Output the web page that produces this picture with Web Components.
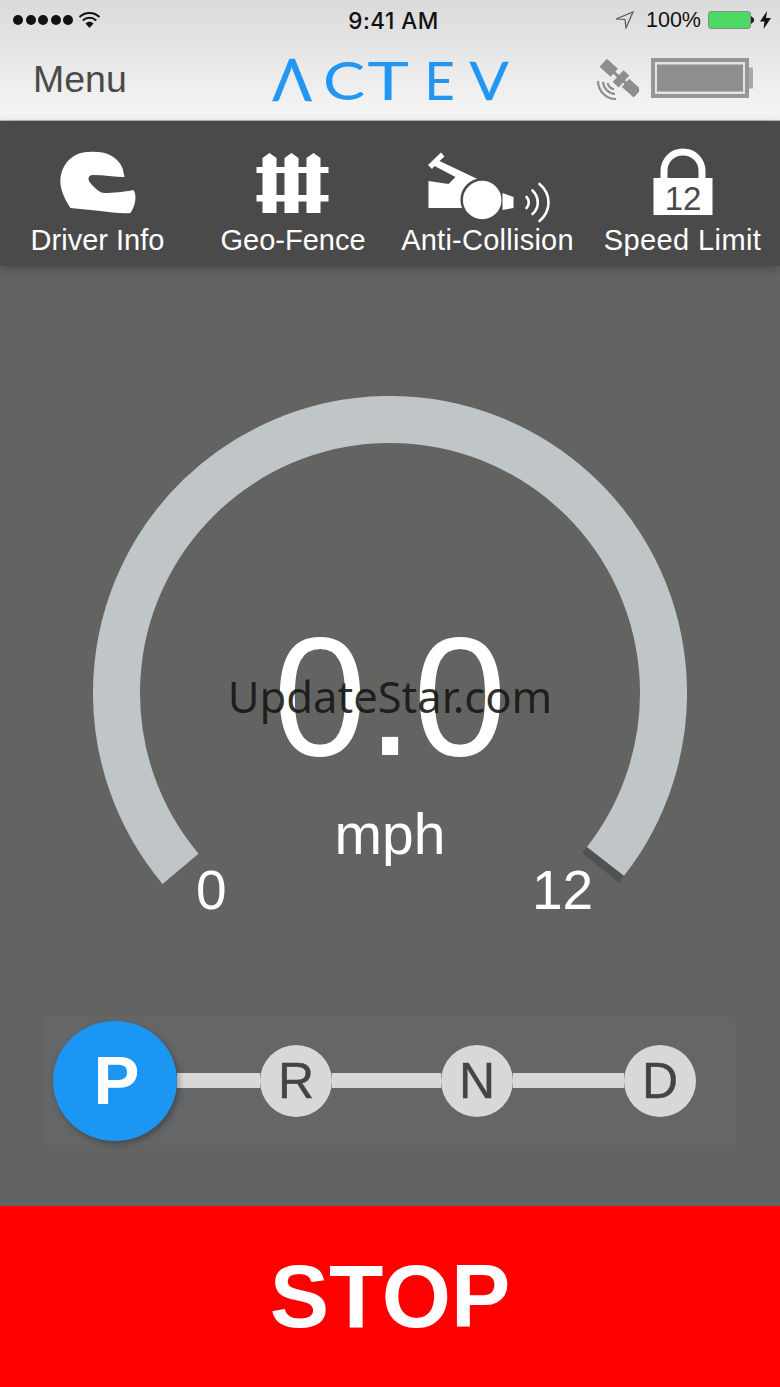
<!DOCTYPE html>
<html lang="en">
<head>
<meta charset="utf-8">
<title>ACTEV</title>
<style>
	html, body { margin: 0; padding: 0; background: #636462; }
	body { width: 780px; height: 1387px; overflow: hidden; display: flex; flex-direction: column; font-family: "Liberation Sans", Arial, sans-serif; }
</style>
</head>
<body>
<app-header></app-header>
<feature-bar>
	<feature-item label="Driver Info">
		<svg slot="icon" width="120" height="72" viewBox="37.5 146 120 72">
			<path fill="#fff" d="M70 208C62 196 59 186 60 178 62 162 74 152 88 152 104 151 116 155 122 168L124 177C114 177 104 175 92 175 88 175 87 179 89 182 94 188 99 193 104 193 112 193 124 192 133 190 136 194 136 204 130 213 120 214 110 212 100 211 90 210 80 209 70 208Z"/>
		</svg>
	</feature-item>
	<feature-item label="Geo-Fence" style="--shift:1px">
		<svg slot="icon" width="120" height="72" viewBox="232.5 146 120 72">
			<path fill="#fff" d="M262 213V158L269 153 276 158V213ZM284 213V158L291 153 298 158V213ZM306 213V158L313 153 320 158V213Z"/>
			<path fill="#fff" d="M256 167H328V173H256ZM256 195H328V201.5H256Z"/>
		</svg>
	</feature-item>
	<feature-item label="Anti-Collision" style="--track:.25px">
		<svg slot="icon" width="130" height="78" viewBox="422.5 146 130 78" style="margin-bottom:-6px">
			<path fill="#fff" d="M427.5 165 440.5 152.500 444 156.500 439 161 479 180 470 192 465 208H428V181L448 184 455 177 434 166 431.500 169Z"/>
			<circle cx="481.7" cy="200" r="20.5" fill="#fff" stroke="#4a4a4a" stroke-width="2.5"/>
			<path fill="#fff" d="M502 193 513 197V208L502 210Z"/>
			<g fill="none" stroke="#fff" stroke-width="2.6" stroke-linecap="round">
				<path d="M526 197C529 200 529 205 526 208"/>
				<path d="M532 190.5C539 197 539 208 532 214"/>
				<path d="M539 184C551 194 551 211 539 221"/>
			</g>
		</svg>
	</feature-item>
	<feature-item label="Speed Limit" style="--track:.4px">
		<svg slot="icon" width="120" height="72" viewBox="622.5 146 120 72">
			<path fill="none" stroke="#fff" stroke-width="7" d="M663.5 180V171C663.5 160 672 152 682.5 152 693 152 701.5 160 701.5 171V180"/>
			<rect x="653" y="178" width="59" height="37" fill="#fff"/>
			<text x="682.5" y="210" text-anchor="middle" font-size="33" fill="#4a4a4a" font-family="Liberation Sans, Arial, sans-serif">12</text>
		</svg>
	</feature-item>
</feature-bar>
<drive-panel>
	<speed-gauge value="0.0" unit="mph" min="0" max="12"></speed-gauge>
	<gear-shift active="P"></gear-shift>
</drive-panel>
<stop-button>STOP</stop-button>

<script>
const FONT = `"Liberation Sans", Arial, sans-serif`;

class AppHeader extends HTMLElement {
	constructor() {
		super();
		this.attachShadow({ mode: "open" });
	}

	connectedCallback() {
		this.shadowRoot.innerHTML = `
      <style>
        :host{ display:block; height:120px; flex:none; background:linear-gradient(180deg,#dadada,#f6f6f6); font-family:${FONT}; border-bottom:1px solid #b9b9b9; }
        .status{ height:40px; display:grid; grid-template-columns:1fr auto 1fr; align-items:center; color:#111; font-size:21.5px; }
        .left{ display:flex; align-items:center; gap:5px; padding-left:13px }
        .dots{ display:flex; gap:2.5px }
        .dots i{ width:10px; height:10px; border-radius:50%; background:#111; display:block }
        .time{ font-family:Inter, ${FONT}; font-weight:500; font-size:22.5px; letter-spacing:.5px; margin-left:7px }
        .right{ display:flex; align-items:center; justify-content:flex-end; padding-right:9px }
        .pct{ margin:0 7px 0 12px }
        .cell{ width:43px; height:18px; box-sizing:border-box; border:1px solid #8a8a8a; border-radius:3px; background:#4cd964 }
        .nav{ height:80px; display:grid; grid-template-columns:1fr auto 1fr; align-items:center; }
        .menu{ padding-left:33px; font-size:37.5px; color:#4a4a4a; padding-bottom:2px }
        .logo{ display:flex; align-items:center; color:#2196f3; font-family:Lato, ${FONT}; font-weight:400; font-size:53px; line-height:1; padding-bottom:2px }
        .logo span{ display:flex; justify-content:center; flex:none }
        .logo .a{ width:39px; margin-right:13px; font-size:58px; -webkit-text-stroke:.6px #2196f3 }
        .logo .c{ width:38px; margin-right:5px; transform:scaleX(1.19) }
        .logo .t{ width:40px; margin-right:19px; transform:scaleX(1.33) }
        .logo .e{ width:26px; margin-right:17px }
        .logo .v{ width:38px; transform:scaleX(1.09); -webkit-text-stroke:.4px #2196f3 }
        .tools{ display:flex; align-items:center; justify-content:flex-end; padding-right:27px; gap:12px; padding-bottom:3px }
        svg{ display:block }
      </style>
      <div class="status">
        <div class="left">
          <div class="dots"><i></i><i></i><i></i><i></i><i></i></div>
          <svg width="23" height="20" viewBox="0 0 23 20"><path fill="none" stroke="#111" stroke-width="2" d="M1.5 7C7 1.5 16 1.5 21.5 7M4.8 10.5C8.5 6.8 14.5 6.8 18.2 10.5"/><path fill="#111" d="M7.5 13.5C10 11 13 11 15.5 13.5L11.5 18Z"/></svg>
        </div>
        <div class="time">9:41 AM</div>
        <div class="right">
          <svg width="19" height="18" viewBox="0 0 19 18"><path fill="none" stroke="#555" stroke-width="1.2" d="M1 8 18 1 11 17 10 8.5Z"/></svg>
          <span class="pct">100%</span>
          <div class="cell"></div>
          <svg width="4" height="8" viewBox="0 0 4 8"><path fill="#222" d="M0 0 3 2.5V5.5L0 8Z"/></svg>
          <svg style="margin-left:5px" width="11" height="18" viewBox="0 0 11 18"><path fill="#111" d="M7 0 0 10.5H4.5L3.5 18 11 7H6Z"/></svg>
        </div>
      </div>
      <div class="nav">
        <div class="menu">Menu</div>
        <div class="logo" aria-label="ACTEV"><span class="a">Λ</span><span class="c">C</span><span class="t">T</span><span class="e">E</span><span class="v">V</span></div>
        <div class="tools">
          <svg width="44" height="42" viewBox="0 0 44 42">
            <g fill="#8e8e8e" transform="translate(26 20.8) rotate(42)">
              <rect x="-24" y="-5.5" width="15" height="11"/>
              <rect x="-4" y="-8" width="8" height="16"/>
              <rect x="6" y="-5.5" width="16" height="11"/>
              <rect x="-12" y="-1.5" width="20" height="3"/>
            </g>
            <g fill="none" stroke="#8e8e8e" stroke-width="2.2">
              <path d="M3 23A18 18 0 0 0 21 41"/>
              <path d="M8 24A13 13 0 0 0 20 36"/>
              <path d="M12.600 25A8.500 8.500 0 0 0 19 31.300"/>
            </g>
          </svg>
          <svg width="102" height="41" viewBox="0 0 102 41">
            <path fill="#a8a8a8" d="M98 9.5H102V30.5H98Z"/>
            <rect x="2" y="2" width="94" height="36" fill="#e4e4e4" stroke="#969696" stroke-width="4"/>
            <rect x="6" y="6.5" width="86" height="27" fill="#8e8e8e"/>
          </svg>
        </div>
      </div>
    `;
	}
}

class FeatureBar extends HTMLElement {
	constructor() {
		super();
		this.attachShadow({ mode: "open" });
	}

	connectedCallback() {
		this.shadowRoot.innerHTML = `
      <style>
        :host{ display:grid; grid-template-columns:repeat(4,1fr); flex:none; height:145px; background:#4a4a4a; box-shadow:0 3px 10px rgba(0,0,0,.25); position:relative; z-index:2; font-family:${FONT}; }
      </style>
      <slot></slot>
    `;
	}
}

class FeatureItem extends HTMLElement {
	constructor() {
		super();
		this.attachShadow({ mode: "open" });
	}

	connectedCallback() {
		this.shadowRoot.innerHTML = `
      <style>
        :host{ display:flex; flex-direction:column; align-items:center; color:#fff; }
        ::slotted(svg){ display:block; margin-top:25px }
        span{ font-size:29px; line-height:34px; margin-top:5px; margin-left:var(--shift,0); letter-spacing:var(--track,0); white-space:nowrap }
      </style>
      <slot name="icon"></slot>
      <span>${this.getAttribute("label")}</span>
    `;
	}
}

class DrivePanel extends HTMLElement {
	constructor() {
		super();
		this.attachShadow({ mode: "open" });
	}

	connectedCallback() {
		this.shadowRoot.innerHTML = `
      <style>
        :host{ display:flex; flex-direction:column; align-items:center; flex:1; background:#636462; padding-top:130px; box-sizing:border-box; }
      </style>
      <slot></slot>
    `;
	}
}

class SpeedGauge extends HTMLElement {
	constructor() {
		super();
		this.attachShadow({ mode: "open" });
	}

	connectedCallback() {
		const a = (n) => this.getAttribute(n);
		this.shadowRoot.innerHTML = `
      <style>
        :host{ display:block; position:relative; width:594px; height:520px; color:#fff; font-family:${FONT}; }
        svg{ display:block }
        div{ position:absolute; white-space:nowrap; line-height:1 }
        .speed{ left:0; right:0; top:217px; text-align:center; font-size:168px }
        .unit{ left:0; right:0; top:410px; text-align:center; font-size:57px }
        .min{ left:103px; top:467px; font-size:55px }
        .max{ left:439px; top:467px; font-size:55px }
        .mark{ left:0; right:0; top:279px; text-align:center; font-family:"Noto Sans", sans-serif; font-size:43.5px; color:rgba(20,20,20,.88) }
      </style>
      <svg width="594" height="520" viewBox="0 0 594 520">
        <path stroke="#505251" stroke-width="8" d="M491.5 454 528.600 483.700"/>
        <path fill="none" stroke="#c0c6c7" stroke-width="47" d="M87.5 472.8A273.5 273.5 0 1 1 512.5 465.4"/>
      </svg>
      <div class="speed">${a("value")}</div>
      <div class="unit">${a("unit")}</div>
      <div class="min">${a("min")}</div>
      <div class="max">${a("max")}</div>
      <div class="mark">UpdateStar.com</div>
    `;
	}
}

class GearShift extends HTMLElement {
	constructor() {
		super();
		this.attachShadow({ mode: "open" });
	}

	connectedCallback() {
		const active = this.getAttribute("active");
		const gears = ["P", "R", "N", "D"];
		const gaps = [83, 109, 111];
		const row = gears
			.map((g, i) => {
				const bar = i < 3 ? `<i style="width:${gaps[i]}px"></i>` : "";
				return `<b class="${g === active ? "on" : ""}">${g}</b>${bar}`;
			})
			.join("");
		this.shadowRoot.innerHTML = `
      <style>
        :host{ display:block; align-self:flex-start; margin:102px 0 0 44px; width:691px; height:127px; box-sizing:border-box; padding-left:9px; background:#656667; box-shadow:0 0 6px #656667; font-family:${FONT}; }
        .row{ display:flex; align-items:center; height:125px }
        b{ display:flex; align-items:center; justify-content:center; width:72px; height:72px; border-radius:50%; background:#d8d8d8; color:#444; font-weight:400; font-size:50px; -webkit-text-stroke:.4px #444; flex:none; position:relative; z-index:1 }
        b.on{ width:124px; height:120px; padding-left:3px; box-sizing:border-box; background:#1b96f3; color:#fff; font-weight:700; font-size:69px; -webkit-text-stroke:0; box-shadow:2px 3px 6px rgba(0,0,0,.3) }
        i{ display:block; height:15px; background:#d8d8d8; flex:none }
      </style>
      <div class="row">${row}</div>
    `;
	}
}

class StopButton extends HTMLElement {
	constructor() {
		super();
		this.attachShadow({ mode: "open" });
	}

	connectedCallback() {
		this.shadowRoot.innerHTML = `
      <style>
        :host{ display:flex; align-items:center; justify-content:center; flex:none; height:181px; background:#ff0000; color:#fff; font-family:${FONT}; font-weight:700; font-size:89px; line-height:1; cursor:pointer; }
      </style>
      <slot></slot>
    `;
	}
}

customElements.define("app-header", AppHeader);
customElements.define("feature-bar", FeatureBar);
customElements.define("feature-item", FeatureItem);
customElements.define("drive-panel", DrivePanel);
customElements.define("speed-gauge", SpeedGauge);
customElements.define("gear-shift", GearShift);
customElements.define("stop-button", StopButton);
</script>
</body>
</html>
